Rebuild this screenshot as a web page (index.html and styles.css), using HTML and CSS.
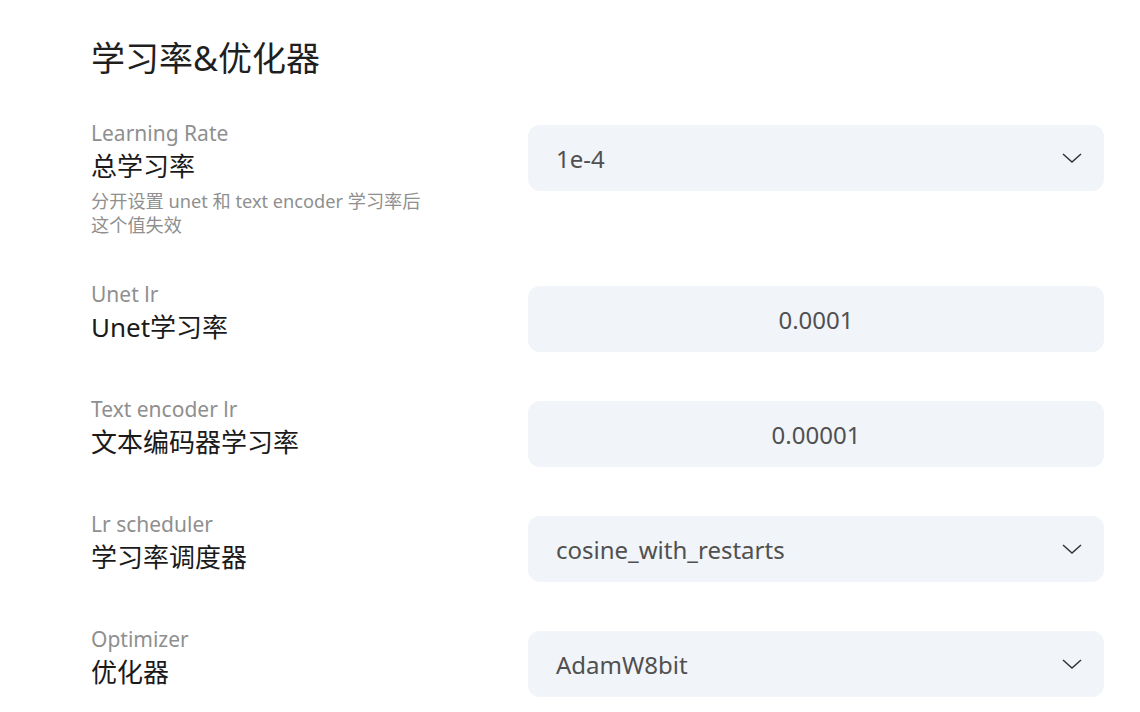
FILE: index.html
```html
<!DOCTYPE html>
<html lang="zh-CN">
<head>
<meta charset="utf-8">
<title>学习率&amp;优化器</title>
<link rel="stylesheet" href="styles.css">
</head>
<body>
<main class="page">
  <h1 class="title">学习率&amp;优化器</h1>
  <div class="rows">
    <div class="row">
      <div class="info">
        <div class="label">Learning Rate</div>
        <div class="name">总学习率</div>
        <div class="desc">分开设置 unet 和 text encoder 学习率后<br>这个值失效</div>
      </div>
      <div class="field select">
        <span class="value">1e-4</span>
        <svg class="chev" width="20" height="10" viewBox="0 0 20 10"><path d="M1 1 L10 9 L19 1" fill="none" stroke="#333" stroke-width="1.5"/></svg>
      </div>
    </div>
    <div class="row">
      <div class="info">
        <div class="label">Unet lr</div>
        <div class="name">Unet学习率</div>
      </div>
      <div class="field number"><span class="value">0.0001</span></div>
    </div>
    <div class="row">
      <div class="info">
        <div class="label">Text encoder lr</div>
        <div class="name">文本编码器学习率</div>
      </div>
      <div class="field number"><span class="value">0.00001</span></div>
    </div>
    <div class="row">
      <div class="info">
        <div class="label">Lr scheduler</div>
        <div class="name">学习率调度器</div>
      </div>
      <div class="field select">
        <span class="value">cosine_with_restarts</span>
        <svg class="chev" width="20" height="10" viewBox="0 0 20 10"><path d="M1 1 L10 9 L19 1" fill="none" stroke="#333" stroke-width="1.5"/></svg>
      </div>
    </div>
    <div class="row">
      <div class="info">
        <div class="label">Optimizer</div>
        <div class="name">优化器</div>
      </div>
      <div class="field select">
        <span class="value">AdamW8bit</span>
        <svg class="chev" width="20" height="10" viewBox="0 0 20 10"><path d="M1 1 L10 9 L19 1" fill="none" stroke="#333" stroke-width="1.5"/></svg>
      </div>
    </div>
  </div>
</main>
</body>
</html>
```

FILE: styles.css
```css
html, body {
  margin: 0;
  padding: 0;
  background: #ffffff;
}
body {
  font-family: "Noto Sans", "Noto Sans CJK SC", sans-serif;
  color: #222;
}
.page {
  padding: 36px 36px 0 91px;
}
.title {
  margin: 0;
  font-size: 34px;
  font-weight: 400;
  line-height: 44px;
  color: #1f1f1f;
}
.rows {
  margin-top: 39px;
  display: flex;
  flex-direction: column;
  gap: 43px;
}
.row {
  display: flex;
  align-items: flex-start;
}
.info {
  flex: 1;
}
.label {
  font-size: 21px;
  line-height: 28px;
  color: #8f8f8f;
}
.name {
  font-size: 26px;
  line-height: 38px;
  color: #1a1a1a;
}
.desc {
  margin-top: 4px;
  font-size: 18.2px;
  line-height: 24px;
  color: #8f8f8f;
}
.field {
  width: 576px;
  height: 66px;
  margin-top: 6px;
  box-sizing: border-box;
  background: #f1f4f9;
  border-radius: 12px;
  display: flex;
  align-items: center;
  font-size: 24px;
  color: #505050;
}
.select {
  padding: 0 22px 0 28px;
  justify-content: space-between;
}
.number {
  justify-content: center;
}
.chev {
  display: block;
}
```
